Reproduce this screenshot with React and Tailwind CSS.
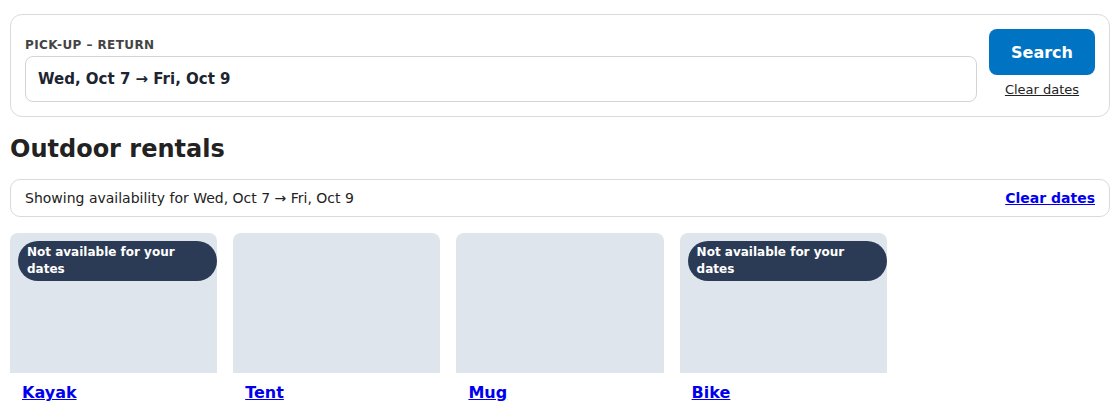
export default function App() {
  const items = [
    { name: "Kayak", available: false },
    { name: "Tent", available: true },
    { name: "Mug", available: true },
    { name: "Bike", available: false },
  ];

  return (
    <div className="bg-white px-[10px] pt-[14px] text-[#222] font-['DejaVu_Sans',sans-serif]">
      {/* date picker */}
      <div className="flex items-start gap-3 rounded-[12px] border border-[#dadada] p-[14px]">
        <div className="flex-1 pt-[9px]">
          <div className="text-[12px] font-bold uppercase leading-[14px] tracking-[0.035em] text-[#444]">
            Pick-up – Return
          </div>
          <div className="mt-[4px] flex h-[46px] items-center rounded-[8px] border border-[#d4d4d4] px-3 text-[15px] font-bold text-[#1e2430]">
            Wed, Oct 7 → Fri, Oct 9
          </div>
        </div>
        <div className="flex flex-col items-center">
          <button className="h-[46px] w-[106px] rounded-[8px] bg-[#0073c2] pt-[1px] text-[16px] font-bold text-white">
            Search
          </button>
          <a href="#" className="mt-[7px] text-[13px] leading-[16px] text-[#222] underline">
            Clear dates
          </a>
        </div>
      </div>

      <h2 className="mt-[15px] text-[24px] font-bold leading-[34px] text-[#222]">Outdoor rentals</h2>

      <div className="mt-[13px] flex h-[38px] items-center justify-between rounded-[10px] border border-[#dadada] px-[14px] text-[14px]">
        <span>Showing availability for Wed, Oct 7 → Fri, Oct 9</span>
        <a href="#" className="font-bold text-[#0000ee] underline">
          Clear dates
        </a>
      </div>

      <div className="mt-[16px] grid grid-cols-5 gap-4">
        {items.map((item) => (
          <div key={item.name}>
            <div className="relative h-[140px] rounded-t-[8px] bg-[#dfe5ed]">
              {!item.available && (
                <span className="absolute left-2 top-2 rounded-full bg-[#2b3b55] py-[3px] pl-[9px] pr-3 text-[12px] font-bold leading-[17px] text-white">
                  Not available for your dates
                </span>
              )}
            </div>
            <div className="px-3 pt-[8px]">
              <a href="#" className="text-[16px] font-bold text-[#0000ee] underline">
                {item.name}
              </a>
            </div>
          </div>
        ))}
      </div>
    </div>
  );
}
